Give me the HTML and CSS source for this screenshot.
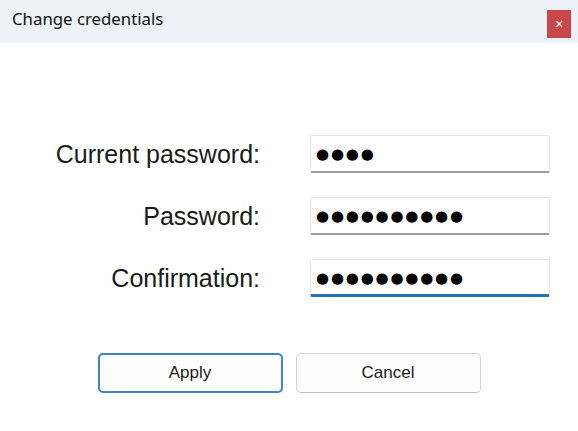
FILE: index.html
```html
<!DOCTYPE html>
<html>
<head>
<meta charset="utf-8">
<link rel="stylesheet" href="styles.css">
</head>
<body>
<div class="window">
  <div class="titlebar">
    <span class="title">Change credentials</span>
    <span class="close">&#x2715;</span>
  </div>
  <div class="content">
    <div class="form">
      <label class="label">Current password:</label>
      <div class="field"><span class="mask">●●●●</span></div>
      <label class="label">Password:</label>
      <div class="field"><span class="mask">●●●●●●●●●●</span></div>
      <label class="label">Confirmation:</label>
      <div class="field focused"><span class="mask">●●●●●●●●●●</span></div>
    </div>
    <div class="buttons">
      <button class="btn default">Apply</button>
      <button class="btn">Cancel</button>
    </div>
  </div>
</div>
</body>
</html>
```

FILE: styles.css
```css
html, body {
  margin: 0;
  padding: 0;
  background: #ffffff;
}
.window {
  width: 578px;
  height: 431px;
  display: flex;
  flex-direction: column;
  background: #ffffff;
}
.titlebar {
  height: 43px;
  background: #eef2f8;
  display: flex;
  align-items: flex-start;
  justify-content: space-between;
  box-sizing: border-box;
}
.title {
  font-family: "Noto Sans", sans-serif;
  font-size: 16.8px;
  color: #111111;
  padding-left: 12px;
  padding-top: 7px;
  line-height: 24px;
}
.close {
  width: 24px;
  height: 28px;
  margin-top: 10px;
  margin-right: 7px;
  background: #c9474a;
  color: #ffffff;
  font-family: "DejaVu Sans", sans-serif;
  font-weight: bold;
  font-size: 11px;
  display: flex;
  align-items: center;
  justify-content: center;
}
.content {
  display: flex;
  flex-direction: column;
  align-items: flex-start;
  padding-top: 92px;
}
.form {
  display: grid;
  grid-template-columns: 260px 240px;
  column-gap: 50px;
  row-gap: 24px;
  align-items: center;
}
.label {
  text-align: right;
  font-family: "Liberation Sans", Arial, sans-serif;
  font-size: 25px;
  color: #1a1a1a;
}
.field {
  height: 38px;
  box-sizing: border-box;
  border: 1px solid #e6e6e6;
  border-bottom: 2px solid #9c9c9c;
  border-radius: 2px;
  background: #ffffff;
  display: flex;
  align-items: center;
  padding-left: 5px;
}
.field.focused {
  border-bottom: 3px solid #2570b6;
  padding-top: 1px;
}
.mask {
  font-family: "DejaVu Sans", sans-serif;
  font-size: 15px;
  letter-spacing: 1.8px;
  color: #000000;
  line-height: 18px;
}
.buttons {
  align-self: center;
  display: flex;
  gap: 13px;
  margin-top: 56px;
}
.btn {
  width: 185px;
  height: 40px;
  box-sizing: border-box;
  background: #fdfdfd;
  border: 1px solid #d4d4d4;
  border-bottom-color: #c0c0c0;
  border-radius: 5px;
  font-family: "Liberation Sans", Arial, sans-serif;
  font-size: 17px;
  color: #1a1a1a;
  padding: 0;
}
.btn.default {
  border: 2px solid #3a86c8;
}
```
